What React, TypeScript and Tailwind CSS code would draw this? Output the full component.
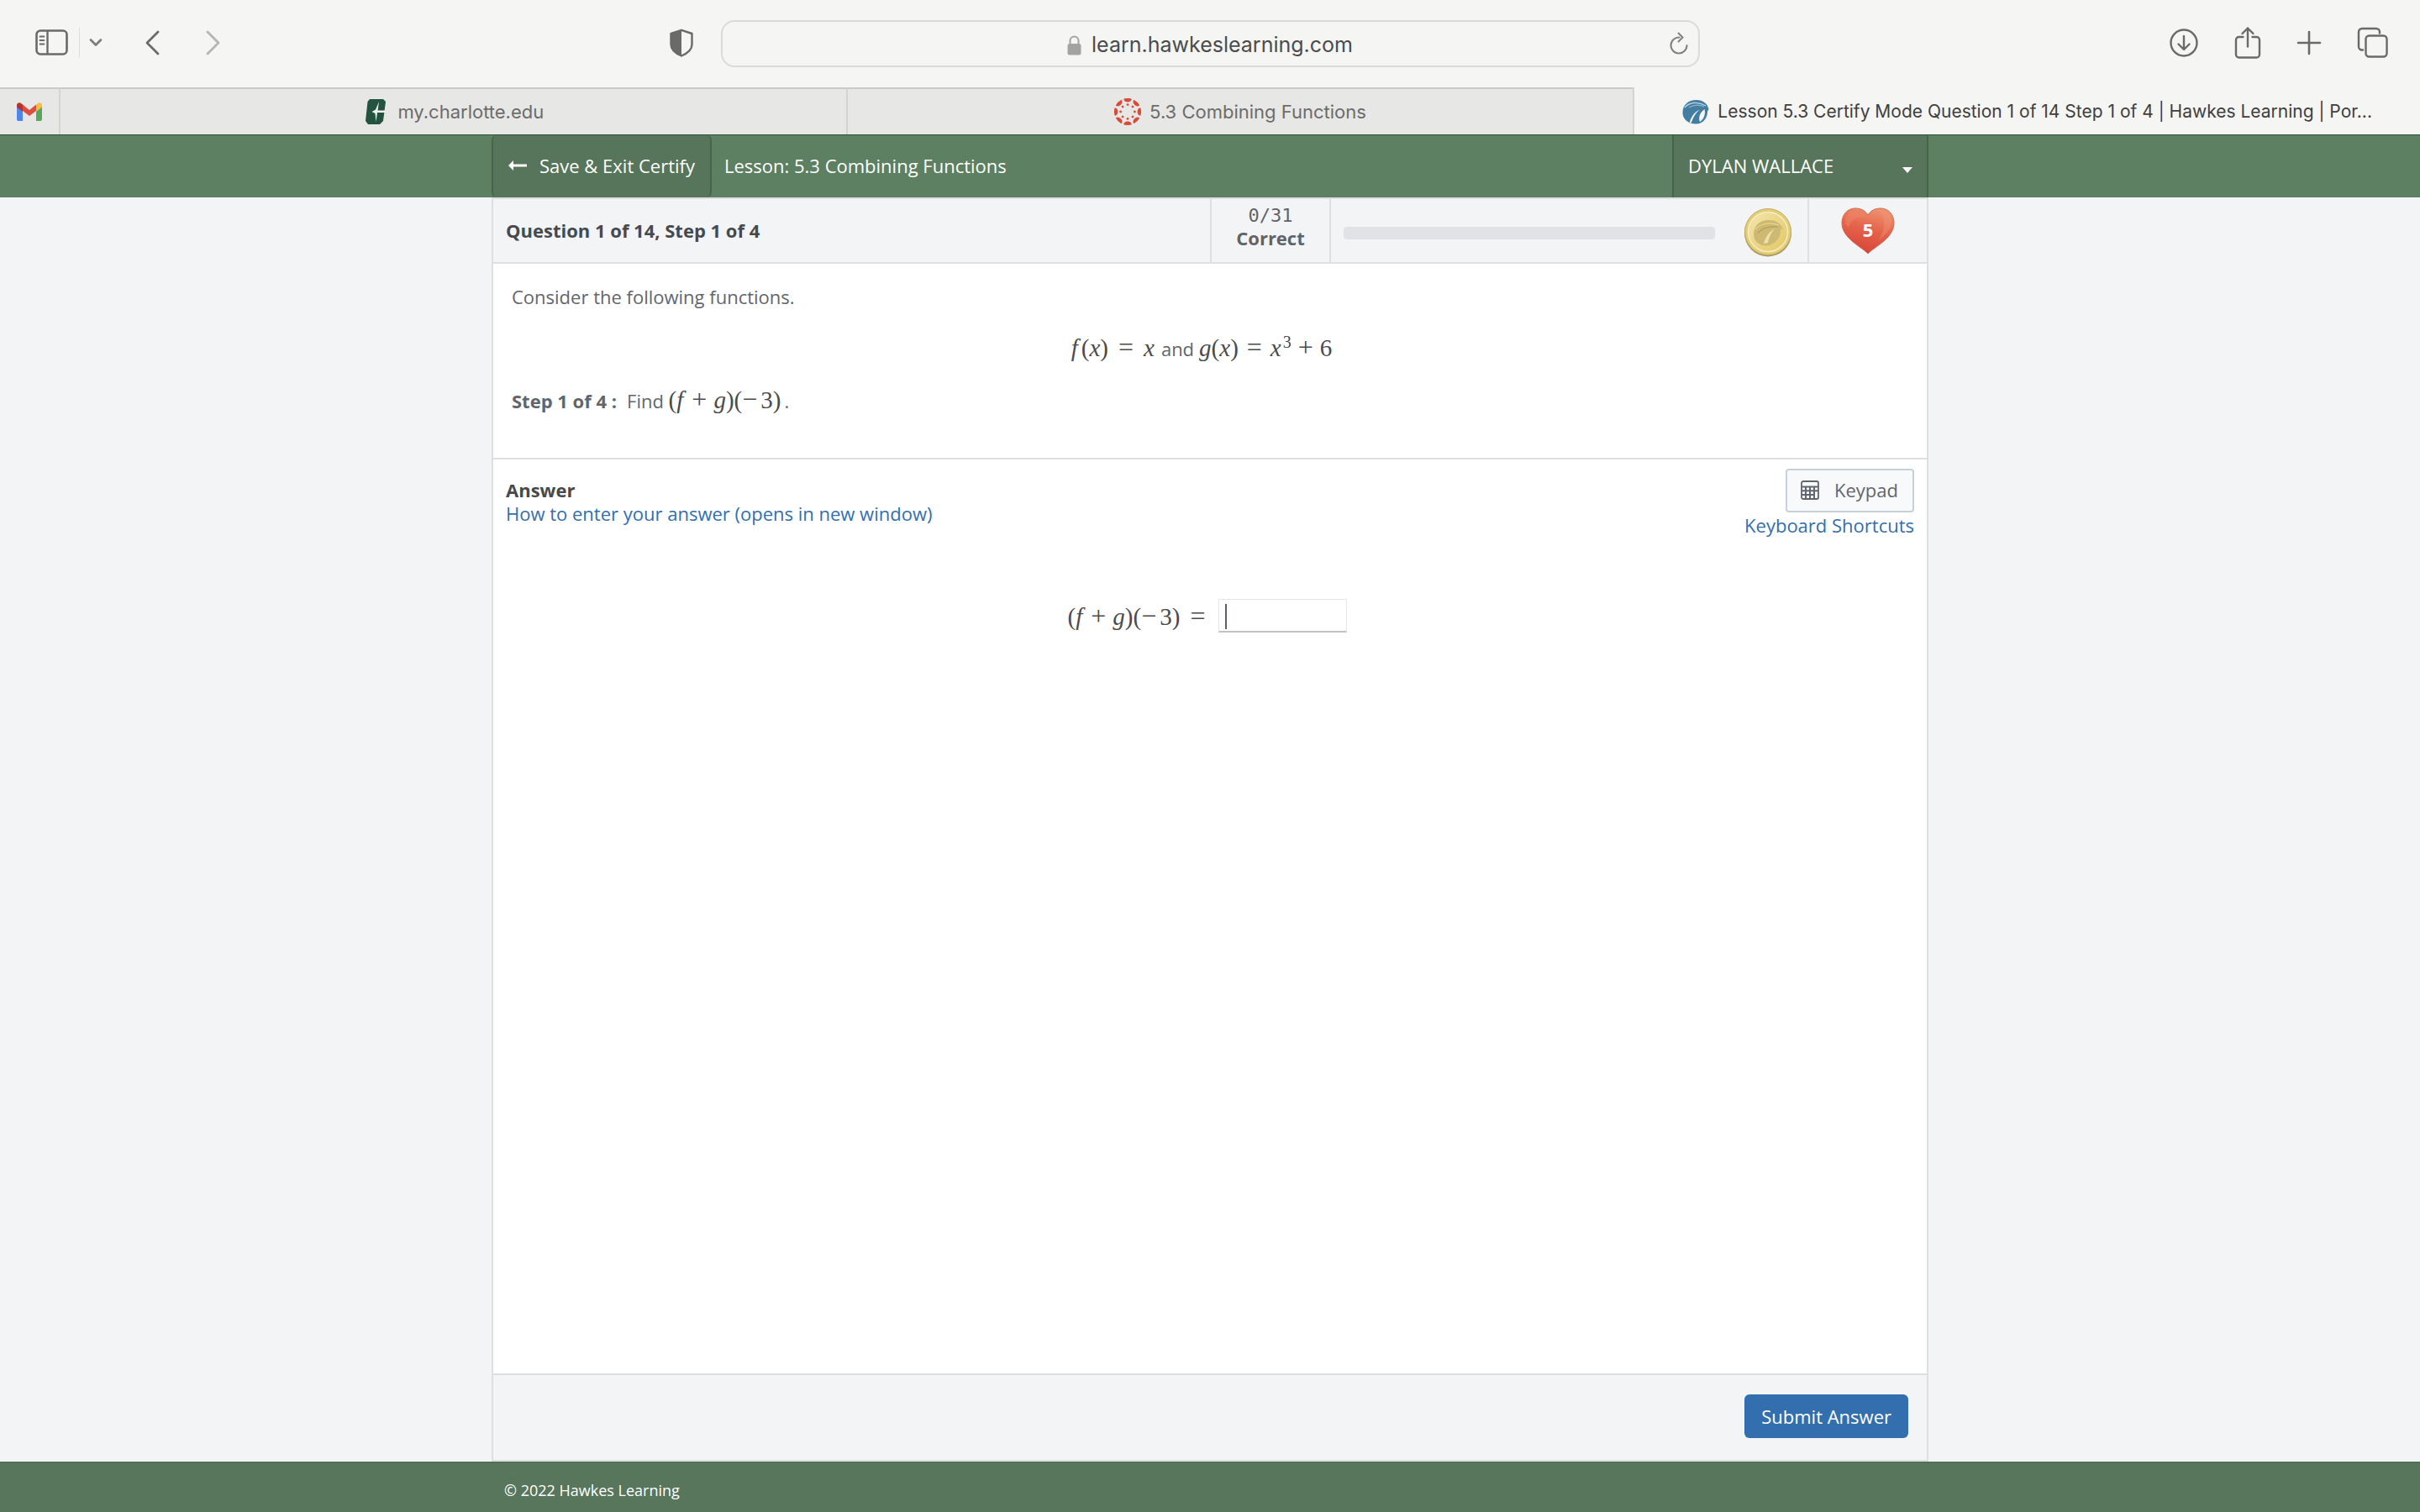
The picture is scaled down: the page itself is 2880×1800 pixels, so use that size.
import type { ReactNode } from 'react'

const SERIF = "font-['Liberation_Serif',serif] text-[29px] leading-[0px] text-[#4b4b4b]"

function SidebarIcon() {
  return (
    <svg width="40" height="32" viewBox="0 0 40 32" fill="none" stroke="#6a6a68">
      <rect x="1.5" y="1.5" width="36" height="28" rx="4.5" strokeWidth="2.6" />
      <path d="M14.5 1.5v28" strokeWidth="2.4" />
      <path d="M5.5 8.5h5M5.5 13h5M5.5 17.5h5" strokeWidth="1.8" strokeLinecap="round" />
    </svg>
  )
}

function ShieldIcon() {
  return (
    <svg width="30" height="34" viewBox="0 0 30 34">
      <path
        d="M15 1.8 27.5 6v13c0 6-5.5 10.5-12.5 13.5C8 29.5 2.5 25 2.5 19V6z"
        fill="none"
        stroke="#6a6a68"
        strokeWidth="2.4"
        strokeLinejoin="round"
      />
      <path d="M15 1.8V32.5C8 29.5 2.5 25 2.5 19V6z" fill="#6a6a68" />
    </svg>
  )
}

function LockIcon() {
  return (
    <svg width="17" height="24" viewBox="0 0 17 24">
      <path d="M3.5 11V6.5a5 5 0 0 1 10 0V11" fill="none" stroke="#a3a3a1" strokeWidth="2" />
      <rect x="0.5" y="10" width="16" height="13.5" rx="2.5" fill="#a3a3a1" />
    </svg>
  )
}

function ReloadIcon() {
  return (
    <svg width="24" height="28" viewBox="0 0 24 28" fill="none" stroke="#808080" strokeWidth="2">
      <path d="M12.5 6.5A9.5 9.5 0 1 0 21.5 16" strokeLinecap="round" />
      <path d="M11.5 1.5 16.5 6.5 11.5 11.5" strokeLinecap="round" strokeLinejoin="round" />
    </svg>
  )
}

function DownloadIcon() {
  return (
    <svg width="36" height="36" viewBox="0 0 36 36" fill="none" stroke="#6a6a68" strokeWidth="2.4" strokeLinecap="round" strokeLinejoin="round">
      <circle cx="18" cy="18" r="15.5" />
      <path d="M18 10v15.5M11.5 19.5l6.5 6.5 6.5-6.5" />
    </svg>
  )
}

function ShareIcon() {
  return (
    <svg width="32" height="40" viewBox="0 0 32 40" fill="none" stroke="#6a6a68" strokeWidth="2.4" strokeLinecap="round" strokeLinejoin="round">
      <path d="M10.5 13H5.5a3.5 3.5 0 0 0-3.5 3.5V34a3.5 3.5 0 0 0 3.5 3.5h21A3.5 3.5 0 0 0 30 34V16.5a3.5 3.5 0 0 0-3.5-3.5h-5" />
      <path d="M16 24.5V2.5M9.5 9 16 2.5 22.5 9" />
    </svg>
  )
}

function PlusIcon() {
  return (
    <svg width="30" height="30" viewBox="0 0 30 30" stroke="#6a6a68" strokeWidth="2.6" strokeLinecap="round">
      <path d="M15 2v26M2 15h26" />
    </svg>
  )
}

function TabsIcon() {
  return (
    <svg width="38" height="38" viewBox="0 0 38 38" fill="none" stroke="#6a6a68" strokeWidth="2.4">
      <path d="M8 27.5H6a4 4 0 0 1-4-4V6a4 4 0 0 1 4-4h17a4 4 0 0 1 4 4v2.5" />
      <rect x="10.5" y="10.5" width="25" height="25" rx="4" />
    </svg>
  )
}

function GmailIcon() {
  return (
    <svg width="30" height="22" viewBox="0 0 30 22">
      <path d="M0 4v16a2 2 0 0 0 2 2h5V9z" fill="#4f86ec" />
      <path d="M30 4v16a2 2 0 0 1-2 2h-5V9z" fill="#58a65c" />
      <path d="M7 10V2.5L15 9l8-6.5V10l-8 6z" fill="#d95040" />
      <path d="M0 3.500v2L7 11V2.500L5 1C3-.5 0 .5 0 3.500z" fill="#b5332b" />
      <path d="M30 3.500v2L23 11V2.500L25 1c2-1.500 5-.5 5 2.500z" fill="#f2bf42" />
    </svg>
  )
}

function CharlotteIcon() {
  return (
    <svg width="32" height="32" viewBox="0 0 32 32">
      <path d="M9 1h16l3 3-3 23-4 4H7l-3-4L6.5 4z" fill="#24543f" />
      <path d="M20 4 18.5 14.5H28l-.4 2.500H18L16.500 28 15.500 18 11.500 16l4.500-2.500z" fill="#f2f5f3" />
    </svg>
  )
}

function CanvasIcon() {
  return (
    <svg width="32" height="32" viewBox="0 0 32 32" fill="#d94a38">
      {[0, 45, 90, 135, 180, 225, 270, 315].map((angle) => (
        <g key={angle} transform={`rotate(${angle} 16 16)`}>
          <path d="M11.2.7a16 16 0 0 1 9.6 0 4.85 4.3 0 0 1-9.6 0z" />
          <circle cx="16" cy="7.6" r="1.4" />
        </g>
      ))}
    </svg>
  )
}

function EagleIcon() {
  return (
    <svg width="32" height="32" viewBox="0 0 32 32">
      <path
        d="M.5 17C.5 8 7 2 17 2c7.5 0 13 4 14.500 11-.5 1.500-1 2-1.500 2 .5 8-5 15.500-13.500 15.500C7 30.500.5 25 .5 17z"
        fill="#447da2"
      />
      <path d="M3 11C8 5 18 3 28 9" fill="none" stroke="#b9d2df" strokeWidth="1.4" />
      <path d="M8 11c5-3 11-4 18-1" fill="none" stroke="#8bb2c8" strokeWidth="1.2" />
      <path d="M26.5 13c1.500 5.500-.5 11.500-5.500 15-2-4-.5-11 5.500-15z" fill="#f5f5f3" />
      <path d="M20.5 13.500C15 16.500 11 21 9 28c-.5 1 1.500 1.500 2 .5 2-6 5-11 9.500-15z" fill="#f5f5f3" />
    </svg>
  )
}

function CoinIcon() {
  return (
    <svg width="58" height="58" viewBox="0 0 58 58">
      <defs>
        <linearGradient id="coin" x1="0" y1="0" x2="1" y2="1">
          <stop offset="0" stopColor="#f3e6ab" />
          <stop offset="1" stopColor="#e2c765" />
        </linearGradient>
      </defs>
      <circle cx="29" cy="29.5" r="28" fill="#a8975a" />
      <circle cx="29" cy="28" r="27.5" fill="#e3cd78" stroke="#c0ac66" />
      <circle cx="29" cy="28" r="23.5" fill="url(#coin)" stroke="#f5ebbd" strokeWidth="1.5" />
      <path
        d="M12 31c0-10 7-17 18-17 9 0 15 4 17 12l-3-2c1 8-3 16-13 20-11 2-19-4-19-13z"
        fill="#cdb972"
      />
      <path d="M14 25c6-7 17-9 28-5" fill="none" stroke="#e3d28c" strokeWidth="1.5" />
      <path d="M17 29c7-7 15-8 24-7" fill="none" stroke="#b9a45c" strokeWidth="1.5" />
      <path d="M37 24c-6 4-11 10-13 18l5-1c1-7 4-12 8-17z" fill="#efe2a8" />
    </svg>
  )
}

function HeartIcon() {
  return (
    <svg width="64" height="56" viewBox="0 0 64 56">
      <defs>
        <linearGradient id="heart" x1="0.7" y1="0" x2="0.4" y2="1">
          <stop offset="0" stopColor="#ee9471" />
          <stop offset="0.45" stopColor="#e5654b" />
          <stop offset="1" stopColor="#d84338" />
        </linearGradient>
      </defs>
      <path
        d="M32 55C25 47 1 37 1 18.5 1 8 8 1 17 1c7 0 12 3 15 8 3-5 8-8 15-8 9 0 16 7 16 17.500C63 37 39 47 32 55z"
        fill="url(#heart)"
        stroke="#cf6850"
      />
      <path d="M5 17C5 9 11 4 18 4.500c6 0 10 4 12 8-8-3-17 0-21 11-2-1-4-3-4-6.500z" fill="#ee8264" opacity=".6" />
      <path d="M47 4c8 0 13 6 13 14-1 9-8 15-15 21 6-10 9-23 2-35z" fill="#f0977a" opacity=".4" />
    </svg>
  )
}

function CalculatorIcon() {
  return (
    <svg width="22" height="23" viewBox="0 0 22 23" fill="none" stroke="#62666c">
      <rect x="1" y="1" width="20" height="21" rx="2" strokeWidth="1.8" />
      <path d="M1 7.5h20M1 12.3h20M1 17h14.5M6 7.5V22M11 7.5V22M16 7.5V22" strokeWidth="2" />
    </svg>
  )
}

function ToolbarButton({ label, children }: { label: string; children: ReactNode }) {
  return (
    <button type="button" aria-label={label} className="flex shrink-0 items-center justify-center">
      {children}
    </button>
  )
}

function Toolbar() {
  return (
    <div className="grid h-26 grid-cols-[1fr_minmax(0,1165px)_1fr] items-center bg-[#f5f5f3]">
      <div className="flex items-center pb-0.5 pl-[42px]">
        <ToolbarButton label="Show sidebar">
          <SidebarIcon />
        </ToolbarButton>
        <span className="ml-3 h-9 w-px bg-[#dededc]" />
        <div className="ml-[11px] flex">
          <ToolbarButton label="Tab groups">
            <svg width="16" height="12" viewBox="0 0 16 12" fill="none" stroke="#7e7e80" strokeWidth="2.8" strokeLinecap="round" strokeLinejoin="round">
              <path d="M2 2.5l6 6 6-6" />
            </svg>
          </ToolbarButton>
        </div>
        <div className="ml-[50px] flex gap-[55px]">
          <ToolbarButton label="Back">
            <svg width="18" height="30" viewBox="0 0 18 30" fill="none" stroke="#6a6a68" strokeWidth="2.8" strokeLinecap="round" strokeLinejoin="round">
              <path d="M16 2 3 15l13 13" />
            </svg>
          </ToolbarButton>
          <ToolbarButton label="Forward">
            <svg width="18" height="30" viewBox="0 0 18 30" fill="none" stroke="#b5b5b3" strokeWidth="2.8" strokeLinecap="round" strokeLinejoin="round">
              <path d="M2 2l13 13L2 28" />
            </svg>
          </ToolbarButton>
        </div>
        <div className="mr-8 ml-auto flex">
          <ToolbarButton label="Privacy report">
            <ShieldIcon />
          </ToolbarButton>
        </div>
      </div>
      <div className="flex h-14 items-center rounded-2xl border-2 border-[#dadad8] pr-[11px] pl-[35px]">
        <div className="flex flex-1 items-center justify-center gap-3 pt-1">
          <LockIcon />
          <span className="text-[25px] text-[#4c4c4c]">learn.hawkeslearning.com</span>
        </div>
        <ToolbarButton label="Reload page">
          <ReloadIcon />
        </ToolbarButton>
      </div>
      <div className="flex items-center justify-end gap-[42px] pr-[37px] pb-0.5">
        <ToolbarButton label="Downloads">
          <DownloadIcon />
        </ToolbarButton>
        <ToolbarButton label="Share">
          <ShareIcon />
        </ToolbarButton>
        <ToolbarButton label="New tab">
          <PlusIcon />
        </ToolbarButton>
        <ToolbarButton label="Tab overview">
          <TabsIcon />
        </ToolbarButton>
      </div>
    </div>
  )
}

function TabBar() {
  const idle =
    'flex min-w-0 items-center justify-center gap-2.5 border-t-2 border-t-[#c9c9c6] bg-[#e7e7e5] text-[22px] text-[#6c6c6a]'
  return (
    <nav aria-label="Browser tabs" className="grid h-14 grid-cols-[70px_1fr_1fr_1fr] bg-[#f5f5f3]">
      <button type="button" aria-label="Gmail" className={idle}>
        <GmailIcon />
      </button>
      <button type="button" className={`${idle} border-l-2 border-l-[#d4d4d1]`}>
        <CharlotteIcon />
        <span>my.charlotte.edu</span>
      </button>
      <button type="button" className={`${idle} border-l-2 border-l-[#d4d4d1]`}>
        <CanvasIcon />
        <span>5.3 Combining Functions</span>
      </button>
      <button
        type="button"
        className="flex min-w-0 items-center justify-center gap-2.5 border-l-2 border-l-[#d4d4d1] pt-0.5 text-[21px] whitespace-nowrap text-[#3f3f3f]"
      >
        <EagleIcon />
        <span>Lesson 5.3 Certify Mode Question 1 of 14 Step 1 of 4 | Hawkes Learning | Por...</span>
      </button>
    </nav>
  )
}

function LessonHeader() {
  return (
    <header className="border-t border-[#2f5537] bg-[#5c8061] text-white">
      <div className="mx-auto flex h-[74px] w-full max-w-[1710px]">
        <button
          type="button"
          className="flex items-center rounded-md border-x-2 border-[#47634b] bg-[#56755a] pr-[18px] pb-0.5 pl-[18px]"
        >
          <svg width="22" height="12" viewBox="0 0 22 12" fill="#fff">
            <path d="M0 6l6-6v4.4h16v3.2H6V12z" />
          </svg>
          <span className="ml-[15px]">Save &amp; Exit Certify</span>
        </button>
        <h1 className="flex items-center pb-0.5 pl-[15px]">Lesson: 5.3 Combining Functions</h1>
        <button
          type="button"
          aria-haspopup="menu"
          className="ml-auto flex w-[305px] items-center justify-between border-x-2 border-[#47634b] bg-[#56755a] px-[17px] pb-0.5"
        >
          <span>DYLAN WALLACE</span>
          <svg width="12" height="7" viewBox="0 0 12 7" fill="#fff" className="mt-2.5">
            <path d="M0 0h12L6 7z" />
          </svg>
        </button>
      </div>
    </header>
  )
}

function StatusBar() {
  return (
    <div className="flex h-[79px] border-y-2 border-[#dedfe0] bg-[#f3f4f6]">
      <h2 className="flex flex-1 items-center pl-[15px] font-bold text-[#47494d]">
        Question 1 of 14, Step 1 of 4
      </h2>
      <div className="flex w-[142px] flex-col items-center justify-center border-l-2 border-[#dedfe0] pb-2.5 leading-[27px] text-[#5f646b]">
        <span className="font-['DejaVu_Sans_Mono',monospace]">0/31</span>
        <span className="font-bold">Correct</span>
      </div>
      <div className="flex w-[569px] items-center border-l-2 border-[#dedfe0] pr-[18px] pl-[15px]">
        <div
          role="progressbar"
          aria-label="Questions correct"
          aria-valuemin={0}
          aria-valuemax={31}
          aria-valuenow={0}
          className="mt-1.5 h-[15px] flex-1 rounded bg-[#e1e2e6]"
        />
        <div className="ml-[34px] pt-1">
          <CoinIcon />
        </div>
      </div>
      <div className="flex w-[142px] items-center justify-center border-l-2 border-[#dedfe0]">
        <div className="grid place-items-center *:col-start-1 *:row-start-1">
          <HeartIcon />
          <span className="pb-0.5 font-bold text-white">5</span>
        </div>
      </div>
    </div>
  )
}

function Op({ children }: { children: string }) {
  return <span className="text-[32px]">{children}</span>
}

// (f + g)(−3)
function SumAtMinusThree() {
  return (
    <>
      (<i className="mr-2.5">f</i>
      <Op>+</Op>
      <i className="ml-2">g</i>)(<Op>−</Op>
      <span className="ml-1">3</span>)
    </>
  )
}

function Question() {
  return (
    <section className="space-y-8 border-b-2 border-[#dedfe0] px-[22px] pt-6 pb-[53px] leading-[30px] text-[#62666c]">
      <p>Consider the following functions.</p>
      <p className="pr-5 text-center">
        <span className={SERIF}>
          <i className="mr-1">f</i>(<i>x</i>)
          <span className="mx-3">
            <Op>=</Op>
          </span>
          <i>x</i>
        </span>
        <span className="mr-1.5 ml-2">and</span>
        <span className={SERIF}>
          <i>g</i>(<i>x</i>)
          <span className="mx-2.5">
            <Op>=</Op>
          </span>
          <i>x</i>
          <sup className="ml-0.5 text-[20px]">3</sup>
          <span className="mx-2">
            <Op>+</Op>
          </span>
          6
        </span>
      </p>
      <p>
        <b>Step 1 of 4 :</b>
        <span className="ml-3">Find </span>
        <span className={SERIF}>
          <SumAtMinusThree />
        </span>
        <span className="ml-1">.</span>
      </p>
    </section>
  )
}

function Answer() {
  return (
    <section className="flex-1">
      <div className="flex justify-between px-[15px] leading-7">
        <div className="pt-[22px]">
          <h3 className="font-bold text-[#47494d]">Answer</h3>
          <a href="#how-to" className="block text-[#326fae]">
            How to enter your answer (opens in new window)
          </a>
        </div>
        <div className="flex flex-col items-end pt-[11px]">
          <button
            type="button"
            className="flex h-13 items-center gap-[18px] rounded border-2 border-[#c6d1d9] bg-[#f7f9fb] pr-[17px] pb-0.5 pl-4 text-[#62666c]"
          >
            <CalculatorIcon />
            Keypad
          </button>
          <a href="#shortcuts" className="mt-px block text-[#326fae]">
            Keyboard Shortcuts
          </a>
        </div>
      </div>
      <div className="mt-[74px] flex items-center justify-center pr-1.5">
        <label htmlFor="answer" className={SERIF}>
          <SumAtMinusThree />
          <span className="ml-3">
            <Op>=</Op>
          </span>
        </label>
        <div className="relative ml-4">
          <input
            id="answer"
            type="text"
            className="block h-10 w-[153px] border border-b-2 border-[#e6e6e6] border-b-[#c2c2c2] bg-white px-2 outline-none"
          />
          <span className="absolute top-1.5 left-2 h-[30px] w-0.5 bg-[#5b6066]" />
        </div>
      </div>
    </section>
  )
}

export default function App() {
  return (
    <div className="flex min-h-screen flex-col bg-[#f3f4f6] font-['Inter',sans-serif]">
      <Toolbar />
      <TabBar />
      <div className="flex flex-1 flex-col font-['Open_Sans',sans-serif] text-[22px]">
        <LessonHeader />
        <main className="mx-auto flex w-full max-w-[1710px] flex-1 flex-col border-x-2 border-b-2 border-[#dedfe0] bg-white">
          <StatusBar />
          <Question />
          <Answer />
          <div className="flex justify-end border-t-2 border-[#dedfe0] bg-[#f3f4f6] px-[22px] pt-[23px] pb-[26px]">
            <button type="button" className="h-13 rounded-md bg-[#336fae] px-5 text-white">
              Submit Answer
            </button>
          </div>
        </main>
        <footer className="h-15 border-t-2 border-[#527056] bg-[#57765b] text-white">
          <p className="mx-auto flex h-full w-full max-w-[1710px] items-center px-[15px] pt-1.5 text-lg">
            © 2022 Hawkes Learning
          </p>
        </footer>
      </div>
    </div>
  )
}
